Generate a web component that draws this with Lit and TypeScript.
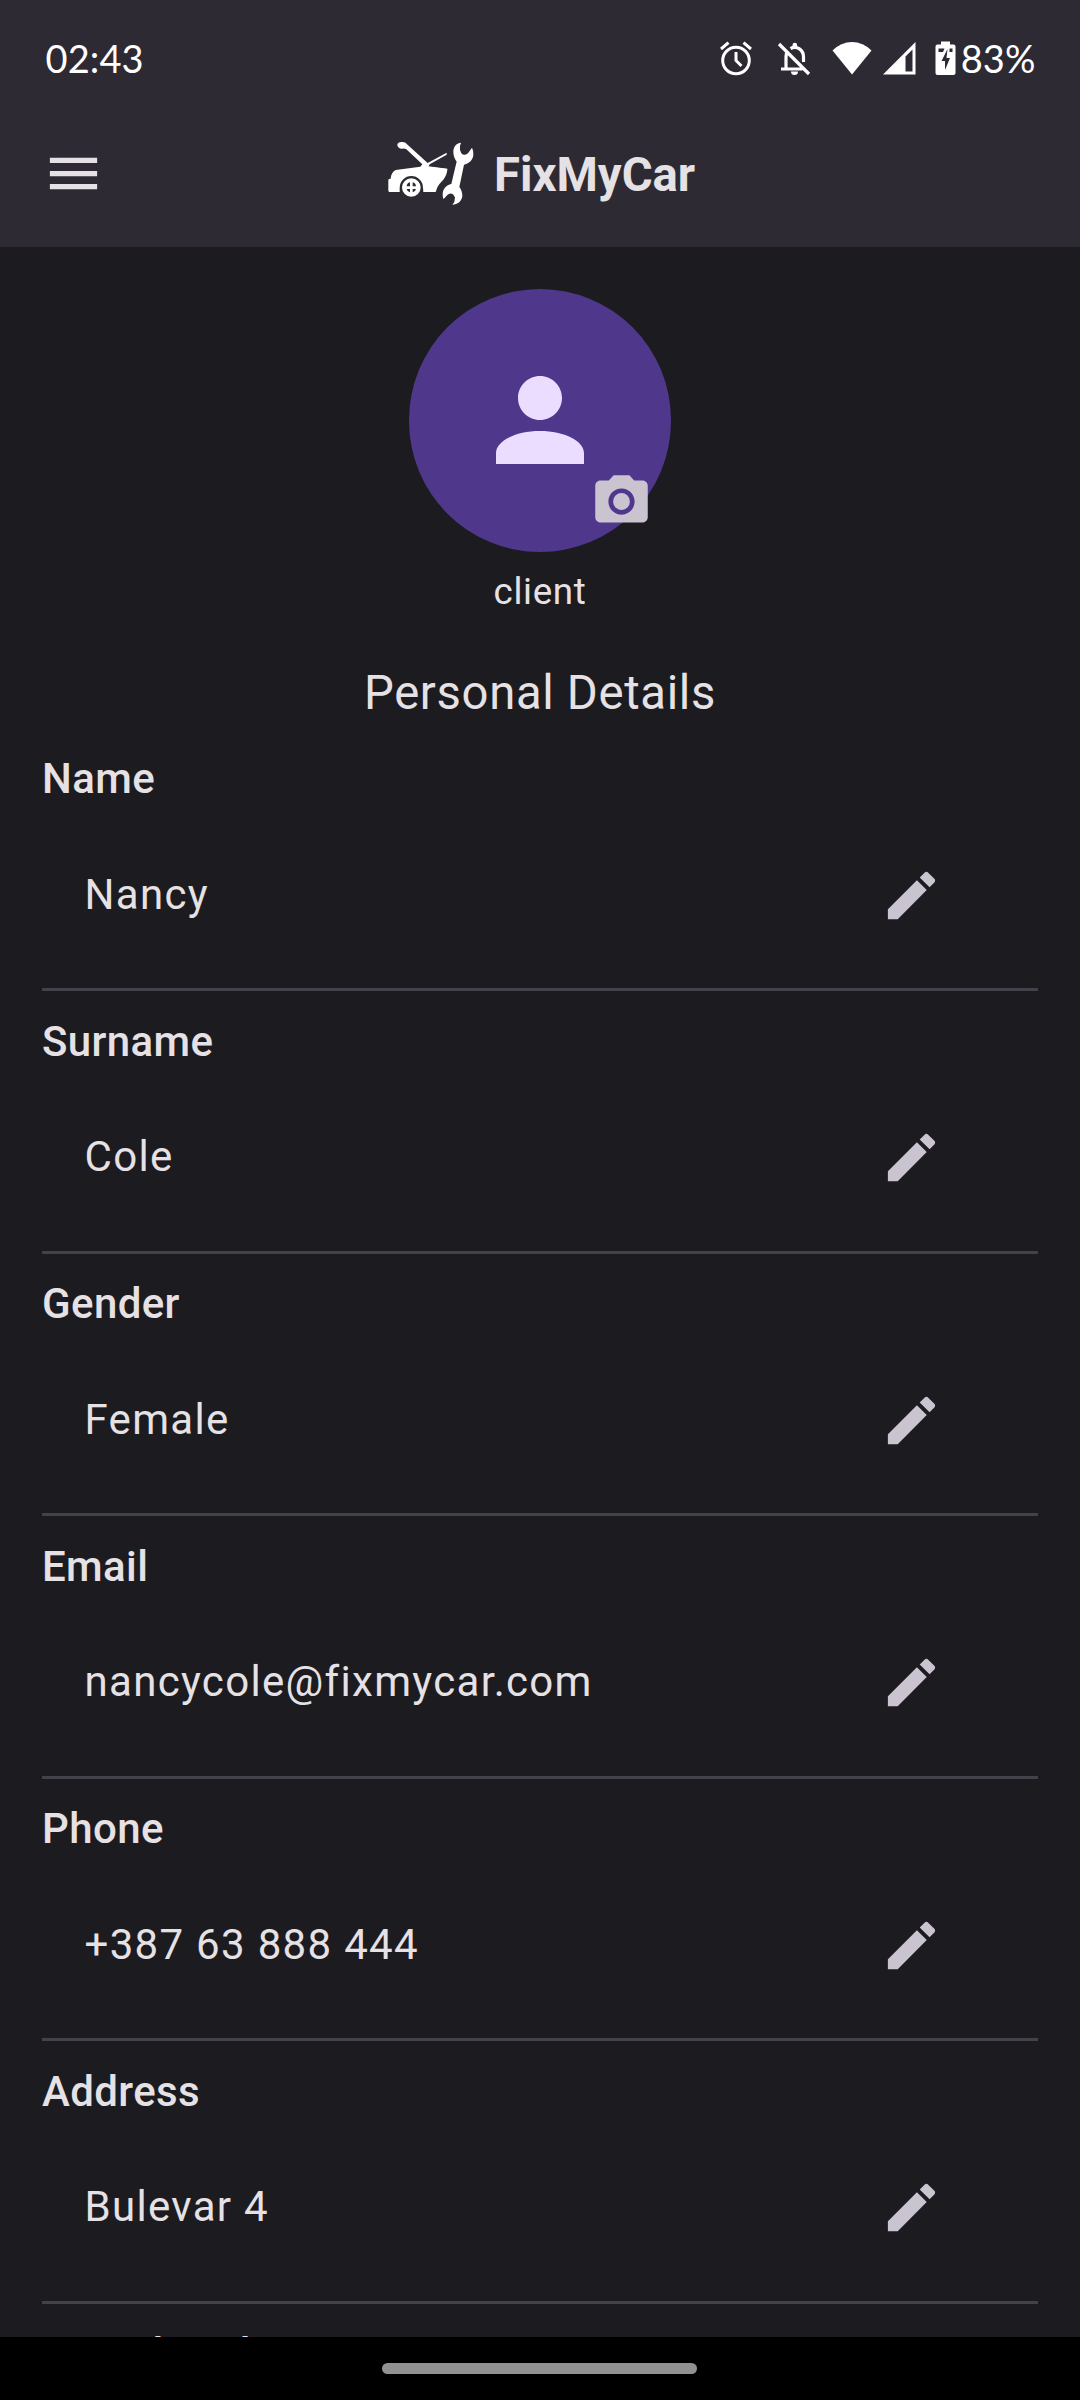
import { LitElement, html, css, svg } from "lit";
import { customElement, property } from "lit/decorators.js";

interface Detail {
  label: string;
  value: string;
}

const DETAILS: Detail[] = [
  { label: "Name", value: "Nancy" },
  { label: "Surname", value: "Cole" },
  { label: "Gender", value: "Female" },
  { label: "Email", value: "nancycole@fixmycar.com" },
  { label: "Phone", value: "+387 63 888 444" },
  { label: "Address", value: "Bulevar 4" },
  { label: "Postal Code", value: "" },
];

const carLogo = svg`
  <path d="M81 46C80 40 86 36 93 36C100 35 106 37 110 43L172 99L229 68L229 74L178 103L174 110L231 117C231 127 227 139 219 149C212 157 203 164 200 175L196 186H159L158 173A35 35 0 0 0 88 173L88 186H57Q54 186 54 181V150Q54 146 61 146C62 134 66 125 76 120L150 110L156 103L108 58Q104 55 96 56Q84 57 81 46Z"/>
  <path fill-rule="evenodd" d="M123 144.500a28 28 0 1 1 0 56a28 28 0 1 1 0-56ZM119 157Q110 159 109 169H119ZM127 157V169H137Q136 159 127 157ZM109 177Q110 184 119 187V177ZM127 177V187Q136 184 137 177Z"/>
  <path d="M174 109L231 116V118H174Z"/>
  <path d="M272 38C257 39 249 51 249 66C249 79 254 88 259 95C254 114 249 137 243 162C228 164 217 177 217 193C217 200 218 205 220 207L231 195Q239 187 248 193L254 202L252 216L246 224C262 224 273 215 276 199C277 190 273 178 267 171L281 104C294 102 309 91 309 73Q309 60 305 53L293 70Q281 79 273 70Q267 62 269 48Z"/>
`;

@customElement("detail-row")
export class DetailRow extends LitElement {
  @property() label = "";
  @property() value = "";

  static styles = css`
    :host {
      display: block;
      height: 262.5px;
    }
    .label {
      height: 63px;
      line-height: 63px;
      font-size: 42px;
      font-weight: 500;
      letter-spacing: 0.39px;
    }
    .row {
      box-sizing: border-box;
      height: 157.5px;
      padding: 13px 95.5px 0 42.5px;
      display: flex;
      align-items: center;
      justify-content: space-between;
    }
    .value {
      margin-bottom: 2px;
      font-size: 42px;
      line-height: 63px;
      letter-spacing: 1.31px;
    }
    .edit {
      width: 63px;
      height: 63px;
      fill: #cac4d0;
    }
    .divider {
      box-sizing: border-box;
      height: 42px;
      padding-top: 2px;
      display: flex;
      align-items: center;
    }
    .line {
      flex: 1;
      height: 3px;
      background: #45414b;
    }
  `;

  render() {
    return html`
      <div class="label">${this.label}</div>
      <div class="row">
        <span class="value">${this.value}</span>
        <svg class="edit" viewBox="0 0 24 24">
          <path d="M3 17.250V21h3.750L17.810 9.940l-3.750-3.750L3 17.250zM20.710 7.040c.39-.39.39-1.020 0-1.410l-2.340-2.340c-.39-.39-1.020-.39-1.410 0l-1.830 1.830 3.750 3.750 1.830-1.830z" />
        </svg>
      </div>
      <div class="divider"><div class="line"></div></div>
    `;
  }
}

@customElement("app-root")
export class AppRoot extends LitElement {
  static styles = css`
    :host {
      display: flex;
      flex-direction: column;
      height: 2400px;
      overflow: hidden;
      background: #1c1b1f;
      color: #e6e1e5;
      font-family: Roboto, "Liberation Sans", sans-serif;
    }
    .top {
      flex: none;
      height: 247px;
      background: #2d2a33;
    }
    .status {
      box-sizing: border-box;
      height: 100px;
      padding: 16px 44.5px 0 45.5px;
      display: flex;
      justify-content: space-between;
      align-items: center;
      color: #fff;
      font-family: Lato, sans-serif;
      font-size: 38px;
    }
    .time {
      letter-spacing: 0.1px;
    }
    .icons {
      display: flex;
      align-items: center;
      fill: #fff;
    }
    .icons svg {
      display: block;
      height: 36px;
    }
    .percent {
      letter-spacing: 0.1px;
    }
    .alarm { width: 34px; margin-right: 23px; }
    .bell { width: 36px; margin-right: 20px; }
    .wifi { width: 40px; margin-right: 11px; }
    .signal { width: 33px; margin-right: 19px; }
    .battery { width: 21px; margin-right: 4.5px; }
    .bar {
      box-sizing: border-box;
      height: 147px;
      padding: 0 42px;
      display: grid;
      grid-template-columns: 345px auto 1fr;
      align-items: center;
    }
    .menu {
      width: 63px;
      height: 63px;
      fill: #e6e1e5;
    }
    .brand {
      display: flex;
      align-items: center;
    }
    .logo {
      width: 88px;
      height: 65px;
      fill: #fff;
      margin-right: 19px;
    }
    .title {
      padding-top: 3px;
      font-size: 47.25px;
      font-weight: 700;
    }
    .content {
      flex: 1;
      min-height: 0;
      overflow: hidden;
      padding: 42px 42px 0;
      display: flex;
      flex-direction: column;
    }
    .avatar {
      flex: none;
      align-self: center;
      position: relative;
      width: 262.5px;
      height: 262.5px;
      border-radius: 50%;
      background: #4f378b;
      display: flex;
      align-items: center;
      justify-content: center;
    }
    .person {
      width: 132px;
      height: 132px;
      fill: #eaddff;
    }
    .camera {
      position: absolute;
      right: 18.4px;
      bottom: 18.4px;
      width: 63px;
      height: 63px;
      fill: #cac4d0;
    }
    .role {
      flex: none;
      margin-top: 14.5px;
      height: 52px;
      line-height: 52px;
      text-align: center;
      font-size: 36.75px;
      letter-spacing: 0.66px;
    }
    .heading {
      flex: none;
      margin-top: 40px;
      height: 71px;
      line-height: 71px;
      text-align: center;
      font-size: 47.25px;
      letter-spacing: 0.66px;
    }
    .list {
      flex: none;
      margin-top: 18px;
    }
    .nav {
      box-sizing: border-box;
      flex: none;
      height: 63px;
      padding-right: 1px;
      background: #000;
      display: flex;
      align-items: center;
      justify-content: center;
    }
    .pill {
      width: 315px;
      height: 11px;
      border-radius: 6px;
      background: #919191;
    }
  `;

  render() {
    return html`
      <header class="top">
        <div class="status">
          <span class="time">02:43</span>
          <div class="icons">
            <svg class="alarm" viewBox="0 0 34 36">
              <g fill="none" stroke="#fff" stroke-width="3">
                <circle cx="17" cy="20.500" r="13.300" />
                <path d="M17 12V20.500L22.500 26M2 9L9.500 2.700M32 9L24.500 2.700" />
              </g>
            </svg>
            <svg class="bell" viewBox="0 0 36 36">
              <g fill="none" stroke="#fff" stroke-width="3.200">
                <path d="M3 4L33 34M5 29H26.500M10 29V17Q10 13 12 11M14.500 8.500C21 5 27.500 10 27.500 17V22" />
              </g>
              <path d="M16.500 7V5a2.300 2.300 0 0 1 4.600 0V7ZM15 31.500h7a3.500 3.500 0 0 1-7 0Z" />
            </svg>
            <svg class="wifi" viewBox="0 0 40 36">
              <path d="M20 34.500L.500 10.500Q9 2 20 2T39.500 10.500Z" />
            </svg>
            <svg class="signal" viewBox="0 0 33 36">
              <path fill-rule="evenodd" d="M0 34.500L32.500 2V34.500ZM22.500 16.500V31.500H29.500V9.500Z" />
            </svg>
            <svg class="battery" viewBox="0 0 21 36">
              <path fill-rule="evenodd" d="M6 1.500H15V4.500H18.500Q20.500 4.500 20.500 6.500V33Q20.500 35 18.500 35H2.500Q.500 35 .500 33V6.500Q.500 4.500 2.500 4.500H6ZM12.500 9L6.500 21H10V30L15 18H11.500ZM3.500 8.500V12H8L9.500 8.500ZM14.500 8.500V12H17.500V8.500Z" />
            </svg>
            <span class="percent">83%</span>
          </div>
        </div>
        <div class="bar">
          <svg class="menu" viewBox="0 0 24 24">
            <path d="M3 18h18v-2H3v2zm0-5h18v-2H3v2zm0-7v2h18V6H3z" />
          </svg>
          <div class="brand">
            <svg class="logo" viewBox="50 33 264 195">${carLogo}</svg>
            <span class="title">FixMyCar</span>
          </div>
        </div>
      </header>
      <main class="content">
        <div class="avatar">
          <svg class="person" viewBox="0 0 24 24">
            <path d="M12 12c2.210 0 4-1.790 4-4s-1.790-4-4-4-4 1.790-4 4 1.790 4 4 4zm0 2c-4.420 0-8 1.790-8 4v2h16v-2c0-2.210-3.580-4-8-4z" />
          </svg>
          <svg class="camera" viewBox="0 0 24 24">
            <circle cx="12" cy="12" r="3.200" />
            <path d="M9 2L7.170 4H4c-1.100 0-2 .9-2 2v12c0 1.100.9 2 2 2h16c1.100 0 2-.9 2-2V6c0-1.100-.9-2-2-2h-3.170L15 2H9zm3 15c-2.760 0-5-2.240-5-5s2.240-5 5-5 5 2.240 5 5-2.240 5-5 5z" />
          </svg>
        </div>
        <div class="role">client</div>
        <div class="heading">Personal Details</div>
        <section class="list">
          ${DETAILS.map((d) => html`<detail-row .label=${d.label} .value=${d.value}></detail-row>`)}
        </section>
      </main>
      <footer class="nav"><div class="pill"></div></footer>
    `;
  }
}
